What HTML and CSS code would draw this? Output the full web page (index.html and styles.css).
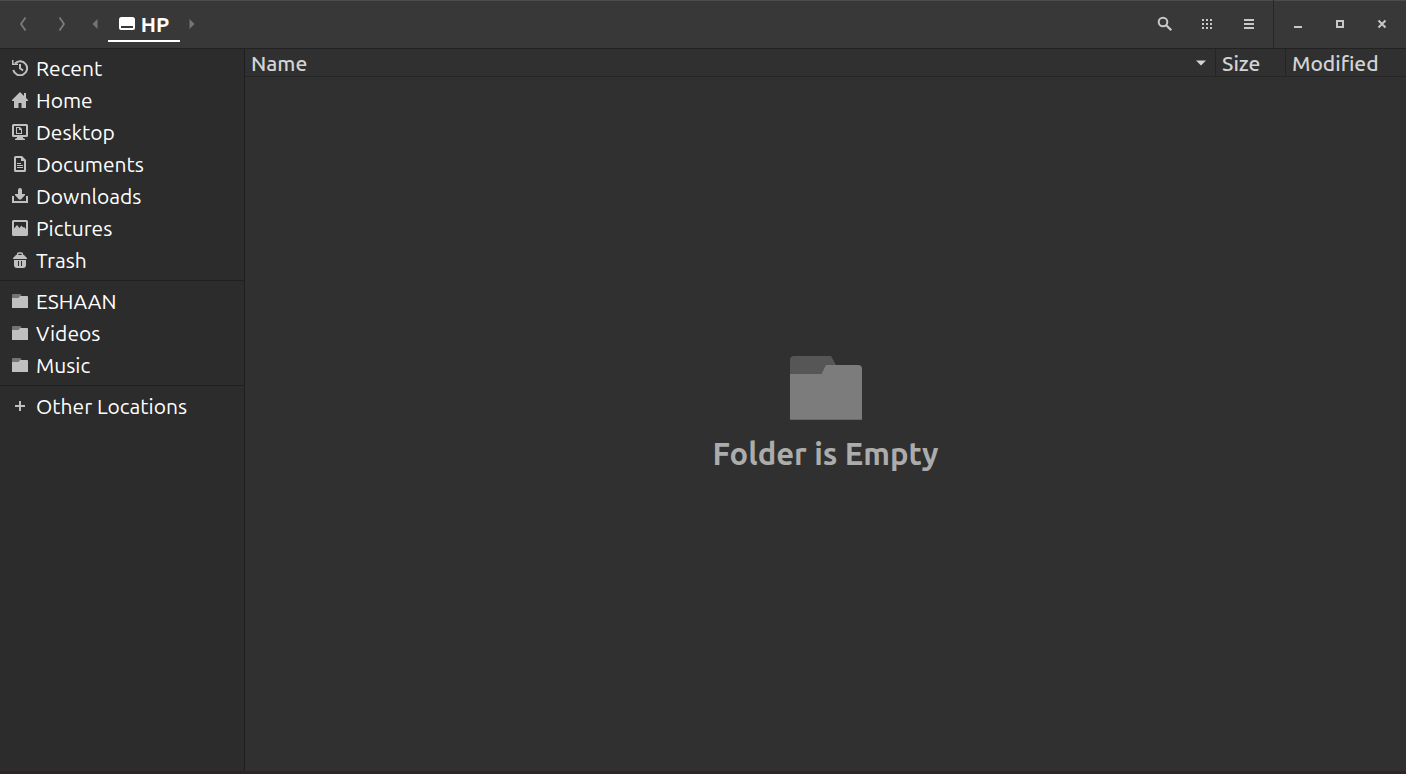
FILE: index.html
```
<!DOCTYPE html>
<html lang="en">
<head>
<meta charset="utf-8">
<title>HP</title>
<link rel="stylesheet" href="styles.css">
</head>
<body>
<div class="window">
  <header class="headerbar">
    <nav class="path" aria-label="Location">
      <button class="nav" aria-label="Back" disabled><svg width="16" height="16" viewBox="0 0 16 16"><path d="M10.500 1.500L6 8l4.500 6.500" fill="none" stroke="currentColor" stroke-width="1.800"/></svg></button>
      <button class="nav" aria-label="Forward" disabled><svg width="16" height="16" viewBox="0 0 16 16"><path d="M5.500 1.500L10 8l-4.500 6.500" fill="none" stroke="currentColor" stroke-width="1.800"/></svg></button>
      <button class="step" aria-label="Scroll path left" disabled><svg width="6" height="10" viewBox="0 0 6 10"><path d="M5.500 0v10L.5 5z" fill="currentColor"/></svg></button>
      <button class="crumb" aria-current="page"><svg width="16" height="14" viewBox="0 0 16 14"><path fill="currentColor" fill-rule="evenodd" d="M2.500 0h11A2.500 2.500 0 0 1 16 2.500V11a2 2 0 0 1-2 2H2a2 2 0 0 1-2-2V2.500A2.500 2.500 0 0 1 2.500 0zM2 9v2h12V9z"/></svg>HP</button>
      <button class="step" aria-label="Scroll path right" disabled><svg width="6" height="10" viewBox="0 0 6 10"><path d="M.5 0v10l5-5z" fill="currentColor"/></svg></button>
    </nav>
    <div class="tools">
      <button aria-label="Search"><svg width="16" height="16" viewBox="0 0 16 16" fill="none" stroke="currentColor"><circle cx="6" cy="6" r="4.300" stroke-width="2"/><path d="M9 9l5.300 5.300" stroke-width="2.300"/></svg></button>
      <button aria-label="Icon view"><svg width="16" height="16" viewBox="0 0 16 16"><path fill="currentColor" d="M3 3h2v2H3zM7 3h2v2H7zM11 3h2v2h-2zM3 7h2v2H3zM7 7h2v2H7zM11 7h2v2h-2zM3 11h2v2H3zM7 11h2v2H7zM11 11h2v2h-2z"/></svg></button>
      <button aria-label="Menu"><svg width="16" height="16" viewBox="0 0 16 16"><path fill="currentColor" d="M3 3h10v2H3zM3 7h10v2H3zM3 11h10v2H3z"/></svg></button>
    </div>
    <div class="controls">
      <button aria-label="Minimize"><svg width="16" height="16" viewBox="0 0 16 16"><path fill="currentColor" d="M4 10h8v2H4z"/></svg></button>
      <button aria-label="Maximize"><svg width="16" height="16" viewBox="0 0 16 16"><path fill="none" stroke="currentColor" stroke-width="2" d="M5 5h6v6H5z"/></svg></button>
      <button aria-label="Close"><svg width="16" height="16" viewBox="0 0 16 16"><path fill="none" stroke="currentColor" stroke-width="2" d="M4.500 4.500l7 7M11.500 4.500l-7 7"/></svg></button>
    </div>
  </header>
  <div class="body">
    <nav class="sidebar" aria-label="Places">
      <ul>
        <li><a href="#"><svg viewBox="0 0 16 16"><path fill="none" stroke="currentColor" stroke-width="2" d="M3 3.500A7 7 0 1 1 1.300 10M8 4v4.200l3 2.300"/><path fill="currentColor" d="M0 0h1.500v3.500H6V5H0z"/></svg>Recent</a></li>
        <li><a href="#"><svg viewBox="0 0 16 16"><path fill="currentColor" d="M8 0l4 4V1h2v5l2 2v1h-2v7H9.500v-5h-3v5H2V9H0V8z"/></svg>Home</a></li>
        <li><a href="#"><svg viewBox="0 0 16 16"><path fill="currentColor" fill-rule="evenodd" d="M1.500 0h13A1.500 1.500 0 0 1 16 1.500v10a1.500 1.500 0 0 1-1.500 1.500H11v1l2 1v1H3v-1l2-1v-1H1.500A1.500 1.500 0 0 1 0 11.500v-10A1.500 1.500 0 0 1 1.500 0zM2 2v9h12V2z"/><path fill="currentColor" fill-rule="evenodd" d="M4 3h4l2 2v5H4zM5 4v5h4V6H7V4z"/></svg>Desktop</a></li>
        <li><a href="#"><svg viewBox="0 0 16 16"><path fill="currentColor" fill-rule="evenodd" d="M3.500 0H10l4 4v10.500a1.500 1.500 0 0 1-1.500 1.500h-9A1.500 1.500 0 0 1 2 14.500v-13A1.500 1.500 0 0 1 3.500 0zM4 2v12h8V5H9V2z"/><path fill="currentColor" d="M5 7h4v1H5zM5 9h6v1H5zM5 11h6v1H5z"/></svg>Documents</a></li>
        <li><a href="#"><svg viewBox="0 0 16 16"><path fill="currentColor" d="M6 2q0-2 2-2t2 2v4h3v1l-4 4.500H7L3 7V6h3zM0 8h2v5h12V8h2v7H0z"/></svg>Downloads</a></li>
        <li><a href="#"><svg viewBox="0 0 16 16"><path fill="currentColor" fill-rule="evenodd" d="M1.500 0h13A1.500 1.500 0 0 1 16 1.500v13a1.500 1.500 0 0 1-1.500 1.500h-13A1.500 1.500 0 0 1 0 14.500v-13A1.500 1.500 0 0 1 1.500 0zM2 2v6.500l3-3.500 2.500 3L9.500 5.500 11 7.500l1-.5 2 2V2z"/></svg>Pictures</a></li>
        <li><a href="#"><svg viewBox="0 0 16 16"><path d="M5.500 3.500V2.500Q5.500 1 7 1h2q1.500 0 1.500 1.500v1" fill="none" stroke="currentColor" stroke-width="1.500"/><path fill="currentColor" fill-rule="evenodd" d="M1 6l3-3h8l3 3v1H1zM2 8h12v5q0 3-3 3H5q-3 0-3-3zM6 9v5h1V9zM9 9v5h1V9z"/></svg>Trash</a></li>
      </ul>
      <ul>
        <li><a href="#"><svg viewBox="0 0 16 16"><path fill="#747474" d="M0 2q0-1 1-1h7.500l1 2H8L7 5H0z"/><path fill="currentColor" d="M0 5h6.500L8 3h7q1 0 1 1v11H0z"/></svg>ESHAAN</a></li>
        <li><a href="#"><svg viewBox="0 0 16 16"><path fill="#747474" d="M0 2q0-1 1-1h7.500l1 2H8L7 5H0z"/><path fill="currentColor" d="M0 5h6.500L8 3h7q1 0 1 1v11H0z"/></svg>Videos</a></li>
        <li><a href="#"><svg viewBox="0 0 16 16"><path fill="#747474" d="M0 2q0-1 1-1h7.500l1 2H8L7 5H0z"/><path fill="currentColor" d="M0 5h6.500L8 3h7q1 0 1 1v11H0z"/></svg>Music</a></li>
      </ul>
      <ul>
        <li><a href="#"><svg viewBox="0 0 16 16"><path fill="currentColor" d="M7 3h2v4h4v2H9v4H7V9H3V7h4z"/></svg>Other Locations</a></li>
      </ul>
    </nav>
    <main class="content">
      <table class="columns">
        <thead><tr>
          <th class="name" aria-sort="ascending"><button>Name<svg width="10" height="6" viewBox="0 0 10 6"><path fill="currentColor" d="M0 .5h10L5 5.500z"/></svg></button></th>
          <th class="size"><button>Size</button></th>
          <th class="modified"><button>Modified</button></th>
        </tr></thead>
      </table>
      <section class="empty">
        <svg width="72" height="64" viewBox="0 0 72 64"><path fill="#565656" d="M0 20V4q0-4 4-4h37l5 9v11z"/><path fill="#7c7c7c" d="M0 18h31.500L36 9h32q4 0 4 4v51H0z"/><path fill="#686868" d="M0 63h72v1H0z"/></svg>
        <h1>Folder is Empty</h1>
      </section>
    </main>
  </div>
</div>
</body>
</html>
```
FILE: styles.css
```
* { box-sizing: border-box; }
body {
  margin: 0;
  background: #303030;
  color: #fff;
  font: 21px/28px Ubuntu, "Noto Sans", sans-serif;
}
button {
  display: flex;
  align-items: center;
  justify-content: center;
  margin: 0;
  padding: 0;
  border: 0;
  background: none;
  color: inherit;
  font: inherit;
}
svg { display: block; flex: none; }
.window {
  display: flex;
  flex-direction: column;
  min-height: 100vh;
  border-bottom: 3px solid #2d2329;
}
.headerbar {
  display: flex;
  height: 49px;
  background: #383838;
  box-shadow: inset 0 1px #4c4c4c;
  border-bottom: 1px solid #222;
  color: #c8c8c8;
}
.path { display: flex; flex: 1; padding-left: 3px; }
.nav { width: 39px; color: #7c7c7c; }
.step { width: 27px; color: #757575; }
.step:last-child { width: 24px; }
.crumb {
  gap: 6px;
  width: 72px;
  margin-bottom: 6px;
  padding-top: 8px;
  border-bottom: 2px solid #fff;
  color: #fff;
  font-weight: 700;
}
.tools, .controls { display: flex; }
.tools { padding-right: 3px; border-right: 1px solid #282828; }
.controls { padding: 0 3px; }
.tools button, .controls button { width: 42px; }
.body { display: flex; flex: 1; }
.sidebar {
  width: 245px;
  padding-top: 3px;
  background: #2c2c2c;
  border-right: 1px solid #1e1e1e;
}
.sidebar ul { margin: 0; padding: 0; list-style: none; }
.sidebar ul + ul {
  margin-top: 4px;
  padding-top: 4px;
  border-top: 1px solid #202020;
}
.sidebar a {
  display: flex;
  align-items: center;
  gap: 8px;
  height: 32px;
  padding-left: 12px;
  color: #fff;
  text-decoration: none;
}
.sidebar svg { width: 16px; height: 16px; color: #c0c0c0; }
.content { display: flex; flex: 1; flex-direction: column; }
.columns {
  width: 100%;
  table-layout: fixed;
  border-collapse: separate;
  border-spacing: 0;
  color: #d3d3d3;
}
.columns th {
  height: 28px;
  padding: 0;
  border-bottom: 1px solid #252525;
  font-weight: 500;
}
.columns th + th { border-left: 1px solid #252525; }
.columns button { width: 100%; height: 27px; padding-left: 6px; justify-content: flex-start; }
.name button { justify-content: space-between; padding-right: 9px; }
.size { width: 70px; }
.modified { width: 121px; }
.empty {
  display: flex;
  flex: 1;
  flex-direction: column;
  align-items: center;
  justify-content: center;
  gap: 12px;
  padding-bottom: 16px;
}
.empty h1 { margin: 0; color: #acacac; font-size: 31px; line-height: 44px; }
```
